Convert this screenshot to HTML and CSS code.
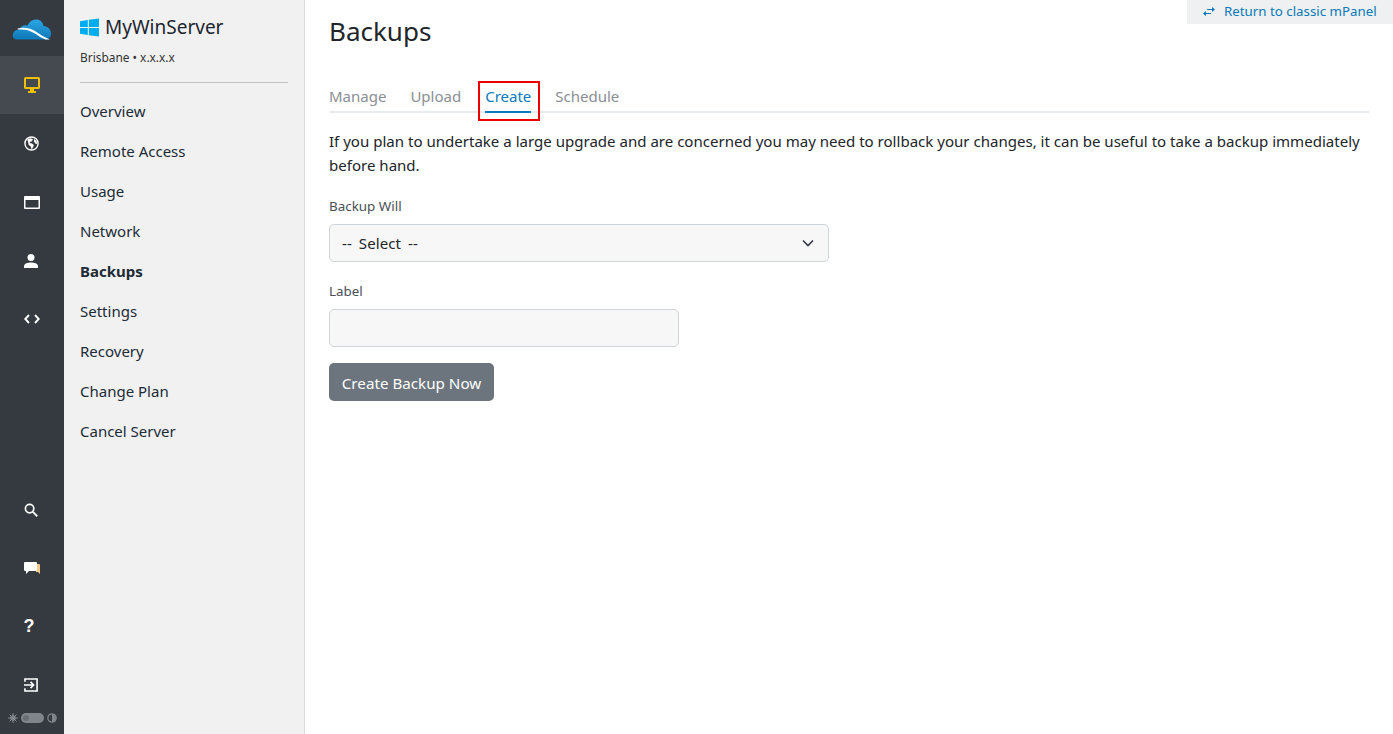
FILE: index.html
```html
<!DOCTYPE html>
<html lang="en">
<head>
<meta charset="utf-8">
<title>Backups</title>
<link rel="stylesheet" href="styles.css">
</head>
<body>
<div class="app">
  <nav class="rail">
    <div class="rail-logo">
      <svg width="40" height="24" viewBox="0 0 40 24"><defs><linearGradient id="cloud" x1="0" y1="0" x2="0" y2="1"><stop offset="0" stop-color="#2ba6e4"/><stop offset="1" stop-color="#0f78b8"/></linearGradient></defs><path fill="url(#cloud)" d="M5 21.500C1.500 21.500.5 19 .8 16.500 1.300 13.500 3.800 11.500 7 11.800 8.500 8 12 6.500 15.500 7.500 17.500 3 21 1 25 1.500c3.500.5 6 3 6.500 6.500 4.500.2 7.500 3.500 7.500 7.500 0 3.500-2 6-5 6z"/><path fill="#fff" d="M5.500 10.500c7-1.500 13-.5 19 3.500 4 2.700 8 5.500 13.500 7.500h-4.500c-4-1.500-7.500-4-11.500-6.500-5-3-10-4-16-3.500z"/></svg>
    </div>
    <a class="rail-item is-current"><svg width="16" height="16" viewBox="0 0 16 16"><path fill="#f0c000" d="M1.500 0h13A1.500 1.500 0 0 1 16 1.500v9a1.500 1.500 0 0 1-1.500 1.500H10v2h2v2H4v-2h2v-2H1.500A1.500 1.500 0 0 1 0 10.500v-9A1.500 1.500 0 0 1 1.500 0zM2 2v8h12V2z"/></svg></a>
    <a class="rail-item"><svg class="nudge-1" width="15" height="15" viewBox="0 0 16 16"><circle cx="8" cy="8" r="7" fill="none" stroke="#fff" stroke-width="1.500"/><path fill="#fff" d="M3.500 3.500 7 2.500l2.500 1-1 2-2 .5-.5 1.500 2.500.5 2 1.500-1 3-1.500 1.500-1-3-2-1.500-.5-2.500zM11 3l2.500 2.500.5 3-2-.5-1.500-2.500z"/></svg></a>
    <a class="rail-item"><svg width="16" height="13" viewBox="0 0 16 13"><path fill="#fff" fill-rule="evenodd" d="M1 0h14a1 1 0 0 1 1 1v11a1 1 0 0 1-1 1H1a1 1 0 0 1-1-1V1a1 1 0 0 1 1-1zm.5 4v7.500h13V4z"/></svg></a>
    <a class="rail-item"><svg class="nudge-2" width="14" height="14" viewBox="0 0 14 14"><circle cx="7" cy="3.500" r="3.500" fill="#fff"/><path fill="#fff" d="M0 14v-2c0-2.500 4-3.500 7-3.500s7 1 7 3.500v2z"/></svg></a>
    <a class="rail-item"><svg width="16" height="10" viewBox="0 0 16 10"><path fill="none" stroke="#fff" stroke-width="1.900" d="M5 1 1.300 5 5 9M11 1l3.700 4L11 9"/></svg></a>
    <div class="rail-spacer"></div>
    <a class="rail-item"><svg class="nudge-2" width="14" height="14" viewBox="0 0 15 15"><circle cx="6" cy="6" r="4.500" fill="none" stroke="#fff" stroke-width="1.800"/><path stroke="#fff" stroke-width="2" d="m9.500 9.500 4.700 4.700"/></svg></a>
    <a class="rail-item"><svg width="16" height="14" viewBox="0 0 16 14"><path fill="#f5c987" d="M12 3h3a1 1 0 0 1 1 1v9l-2-2h-2z"/><path fill="#fff" d="M1 1h11a1 1 0 0 1 1 1v7a1 1 0 0 1-1 1H5l-3 3v-3H1a1 1 0 0 1-1-1V2a1 1 0 0 1 1-1z"/></svg></a>
    <a class="rail-item"><span class="rail-glyph">?</span></a>
    <a class="rail-item"><svg class="nudge-2" width="14" height="14" viewBox="0 0 15 15"><path fill="none" stroke="#fff" stroke-width="1.700" d="M1 4V1h13v13H1v-3"/><path fill="none" stroke="#fff" stroke-width="1.700" d="M0 7.500h9.500M7 4.200l3.300 3.300L7 10.800"/></svg></a>
    <div class="theme">
      <svg width="10" height="10" viewBox="0 0 10 10"><circle cx="5" cy="5" r="2.800" fill="#80858b"/><path stroke="#80858b" d="M5 0v10M0 5h10M1.500 1.500l7 7M8.500 1.500l-7 7"/></svg>
      <span class="theme-track"><span class="theme-knob"></span></span>
      <svg width="10" height="10" viewBox="0 0 10 10"><circle cx="5" cy="5" r="4.200" fill="none" stroke="#80858b" stroke-width="1.200"/><path fill="#80858b" d="M5 1a4 4 0 0 1 0 8z"/></svg>
    </div>
  </nav>

  <aside class="side">
    <div class="server">
      <svg class="win" width="19" height="19" viewBox="0 0 20 19"><path fill="#00adef" d="M0 2.800 8.200 1.500v7.400H0zM9.300 1.400 20 0v8.900H9.300zM0 10h8.200v7.500L0 16.200zM9.300 10H20v9L9.300 17.600z"/></svg>
      <span class="server-name">MyWinServer</span>
    </div>
    <div class="server-meta">Brisbane • x.x.x.x</div>
    <ul class="side-nav">
      <li>Overview</li>
      <li>Remote Access</li>
      <li>Usage</li>
      <li>Network</li>
      <li class="is-active">Backups</li>
      <li>Settings</li>
      <li>Recovery</li>
      <li>Change Plan</li>
      <li>Cancel Server</li>
    </ul>
  </aside>

  <main class="main">
    <a class="classic">
      <svg width="12" height="9" viewBox="0 0 12 9"><path fill="#0a7ab8" d="M4 2h5V0l3 2.500L9 5V3H4zM8 6H3V4L0 6.500 3 9V7h5z"/></svg>
      Return to classic mPanel
    </a>
    <h1 class="title">Backups</h1>
    <div class="tabs">
      <span class="tab">Manage</span>
      <span class="tab">Upload</span>
      <span class="tab is-active">Create</span>
      <span class="tab">Schedule</span>
    </div>
    <p class="intro">If you plan to undertake a large upgrade and are concerned you may need to rollback your changes, it can be useful to take a backup immediately before hand.</p>
    <form class="form">
      <label class="field-label">Backup Will</label>
      <div class="select">
        <span class="select-value">-- Select --</span>
        <svg width="12" height="8" viewBox="0 0 12 8"><path fill="none" stroke="#343a40" stroke-width="1.600" d="m1 1.500 5 5 5-5"/></svg>
      </div>
      <label class="field-label">Label</label>
      <div class="input"></div>
      <button class="btn" type="button">Create Backup Now</button>
    </form>
  </main>
</div>
</body>
</html>
```
FILE: styles.css
```css
* { box-sizing: border-box; }
html, body { margin: 0; height: 100%; }
body {
  font-family: "Noto Sans", "Open Sans", sans-serif;
  font-size: 15px;
  color: #212529;
  background: #fff;
  overflow: hidden;
}
.app { display: flex; height: 734px; }

.rail {
  width: 64px;
  flex: none;
  background: #343a40;
  display: flex;
  flex-direction: column;
}
.rail-logo { height: 56px; display: flex; align-items: center; justify-content: center; padding-top: 4px; }
.rail-item { height: 58.500px; flex: none; display: flex; align-items: center; justify-content: center; }
.rail-item.is-current { background: #454a50; height: 58px; margin-bottom: .5px; }
.rail-glyph { color: #fff; font-family: "Liberation Sans", sans-serif; font-weight: 700; font-size: 18px; margin-right: 6px; }
.nudge-1 { margin-right: 1px; }
.nudge-2 { margin-right: 2px; }
.rail-spacer { flex: 1; }
.theme { height: 7px; margin-bottom: 12.500px; display: flex; align-items: center; justify-content: center; gap: 3px; }
.theme-track { width: 23px; height: 10px; border-radius: 5px; background: #80858b; padding: 2px; display: block; flex: none; }
.theme-knob { display: block; width: 6px; height: 6px; border-radius: 50%; background: #6a6f75; }
.theme svg { flex: none; }

.side {
  width: 241px;
  flex: none;
  background: #f1f1f1;
  border-right: 1px solid #dcdcdc;
  padding: 0 16px;
}
.server { display: flex; align-items: center; gap: 6px; height: 37px; margin-top: 8px; }
.win { flex: none; margin-top: 1px; }
.server-name { font-size: 19px; color: #1c2530; }
.server-meta { font-size: 11.900px; color: #333; height: 38px; line-height: 24px; border-bottom: 1px solid #c4c4c4; }
.side-nav { list-style: none; margin: 8px 0 0; padding: 0; }
.side-nav li { height: 40px; line-height: 40px; font-size: 15px; color: #212b36; }
.side-nav .is-active { font-weight: 700; }

.main { flex: 1; min-width: 0; padding: 0 24px; position: relative; }
.classic {
  position: absolute;
  top: 0;
  right: 0;
  width: 206px;
  height: 24px;
  background: #eef0f2;
  color: #0a7ab8;
  font-size: 13.300px;
  display: flex;
  align-items: center;
  gap: 9px;
  padding: 0 0 2px 16px;
}
.title { margin: 0; padding-top: 12px; height: 82px; font-size: 26px; font-weight: 400; line-height: 38px; color: #212529; }
.tabs { display: flex; gap: 24px; height: 31px; border-bottom: 2px solid #e9ecef; }
.tab { color: #8a8f94; font-size: 15px; line-height: 28px; height: 31px; position: relative; }
.tab.is-active { color: #0a7ab8; border-bottom: 2px solid #0a7ab8; }
.tab.is-active::after {
  content: "";
  box-sizing: border-box;
  position: absolute;
  left: -7.500px;
  right: -8.500px;
  top: -1px;
  height: 40px;
  border: 2px solid #ee0000;
}
.intro { margin: 16px 0 0; line-height: 24px; font-size: 15.050px; color: #212529; }
.form { display: flex; flex-direction: column; align-items: flex-start; margin-top: 19px; }
.field-label { font-size: 13.400px; line-height: 20px; color: #495057; margin-bottom: 8px; }
.select, .input {
  height: 38px;
  background: #f7f7f7;
  border: 1px solid #ced4da;
  border-radius: 5px;
}
.select {
  width: 500px;
  display: flex;
  align-items: center;
  justify-content: space-between;
  padding: 0 14px 0 12px;
  margin-bottom: 19px;
  font-size: 15px;
}
.select-value { word-spacing: 3px; letter-spacing: .1px; }
.input { width: 350px; margin-bottom: 16px; }
.btn {
  height: 38px;
  width: 165px;
  border: 0;
  border-radius: 5px;
  background: #6c757d;
  color: #fff;
  font: inherit;
  font-size: 15.200px;
  padding: 1px 0 0;
}
```
